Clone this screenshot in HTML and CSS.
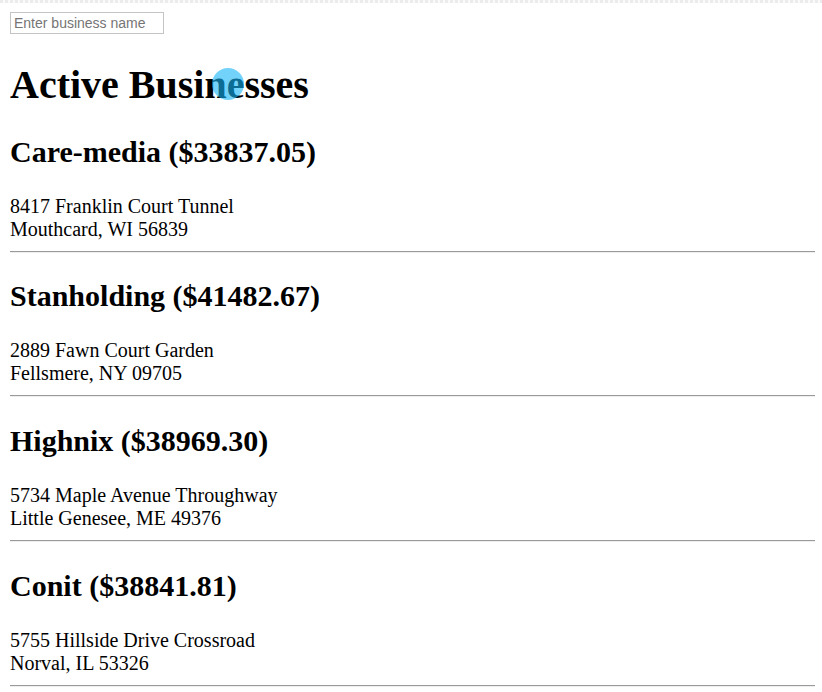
FILE: index.html
```html
<!DOCTYPE html>
<html>
<head>
<meta charset="utf-8">
<link rel="stylesheet" href="styles.css">
</head>
<body>
<div class="topline"></div>
<input class="search" type="text" placeholder="Enter business name">
<h1 class="title">Active Businesses</h1>
<div class="biz">
  <h2 class="name">Care-media ($33837.05)</h2>
  <p class="addr">8417 Franklin Court Tunnel<br>Mouthcard, WI 56839</p>
  <hr class="sep">
</div>
<div class="biz">
  <h2 class="name">Stanholding ($41482.67)</h2>
  <p class="addr">2889 Fawn Court Garden<br>Fellsmere, NY 09705</p>
  <hr class="sep">
</div>
<div class="biz">
  <h2 class="name">Highnix ($38969.30)</h2>
  <p class="addr">5734 Maple Avenue Throughway<br>Little Genesee, ME 49376</p>
  <hr class="sep">
</div>
<div class="biz">
  <h2 class="name">Conit ($38841.81)</h2>
  <p class="addr">5755 Hillside Drive Crossroad<br>Norval, IL 53326</p>
  <hr class="sep">
</div>
<div class="cursor-dot"></div>
</body>
</html>
```
FILE: styles.css
```css
html, body {
  background: #fff;
}
body {
  margin: 10px 7px 10px 10px;
  font-family: "Liberation Serif", "Times New Roman", serif;
  font-size: 20px;
  line-height: 23px;
  color: #000;
}
.topline {
  position: absolute;
  left: 0;
  top: 0;
  width: 100%;
  height: 3px;
  background: repeating-linear-gradient(90deg, #ececec 0 3px, #fafafa 3px 5px);
}
.search {
  display: block;
  box-sizing: border-box;
  margin: 2px 0 0 0;
  width: 154px;
  height: 22px;
  padding: 1px 3px;
  border: 1px solid #c4c4c4;
  border-radius: 0;
  font-family: "Liberation Sans", Arial, sans-serif;
  font-size: 14px;
  color: #333;
  outline: none;
}
.search::placeholder {
  color: #757575;
}
.title {
  font-size: 40px;
  line-height: 46px;
  font-weight: bold;
  margin: 28px 0 0 0;
}
.name {
  font-size: 30px;
  line-height: 34px;
  font-weight: bold;
  margin: 26.67px 0 0 0;
}
.addr {
  margin: 26px 0 0 0;
}
.sep {
  margin: 10px 0 0 0;
  border: none;
  border-top: 1px solid #9a9a9a;
  border-bottom: 1px solid #eeeeee;
  height: 0;
}
.cursor-dot {
  position: absolute;
  left: 212px;
  top: 68px;
  width: 32px;
  height: 32px;
  border-radius: 50%;
  background: rgba(20, 180, 245, 0.6);
}
```
